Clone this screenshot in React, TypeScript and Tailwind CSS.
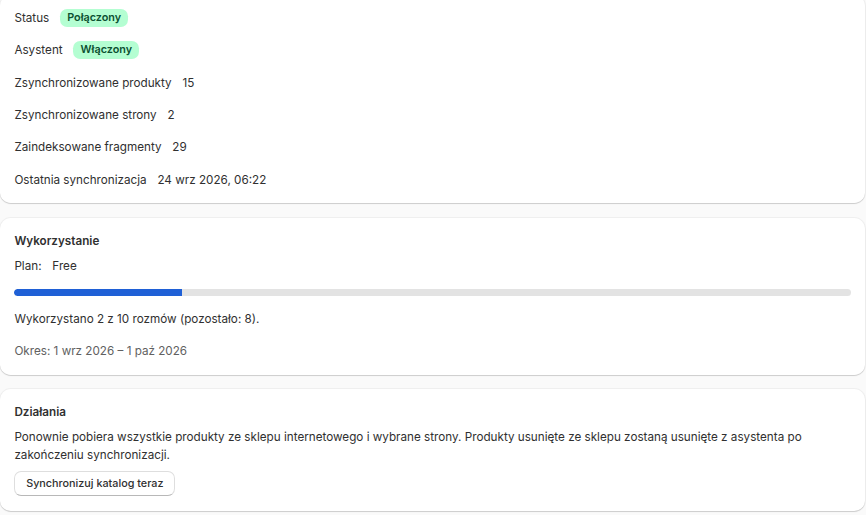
import React from "react";

function Badge({ children }: { children: React.ReactNode }) {
  return (
    <span className="inline-flex h-[18px] items-center rounded-[7.2px] bg-[#b4fed2] px-[7.2px] text-[10.8px] font-semibold leading-[14px] text-[#0c5132]">
      {children}
    </span>
  );
}

function Row({ label, children }: { label: string; children: React.ReactNode }) {
  return (
    <div className="flex h-[18px] items-center gap-[10.8px]">
      <span>{label}</span>
      {children}
    </div>
  );
}

const card =
  "w-[865px] rounded-[10.8px] bg-white px-[14.4px] shadow-[0_0_0_1px_rgba(0,0,0,0.045),0_1px_1px_rgba(0,0,0,0.14)]";

export default function App() {
  const used = 2;
  const total = 10;
  return (
    <div
      className="min-h-[515px] overflow-hidden bg-[#fafafa] text-[11.7px] leading-[18px] text-[#303030]"
      style={{ fontFamily: "Inter, 'Noto Sans', sans-serif" }}
    >
      <div className="-mt-[5.5px] flex flex-col gap-[14.4px]">
        <div className={`${card} flex flex-col gap-[14.4px] pb-[14.4px] pt-[14.4px]`}>
          <Row label="Status">
            <Badge>Połączony</Badge>
          </Row>
          <Row label="Asystent">
            <Badge>Włączony</Badge>
          </Row>
          <Row label="Zsynchronizowane produkty">
            <span>15</span>
          </Row>
          <Row label="Zsynchronizowane strony">
            <span>2</span>
          </Row>
          <Row label="Zaindeksowane fragmenty">
            <span>29</span>
          </Row>
          <Row label="Ostatnia synchronizacja">
            <span>24 wrz 2026, 06:22</span>
          </Row>
        </div>

        <div className={`${card} pb-[14.4px] pt-[14.4px]`}>
          <h2 className="text-[11.7px] font-semibold leading-[18px]">Wykorzystanie</h2>
          <div className="mt-[7.2px] flex gap-[10.8px]">
            <span>Plan:</span>
            <span>Free</span>
          </div>
          <div className="mt-[13.5px] h-[7.5px] w-full overflow-hidden rounded-full bg-[#e3e3e3]">
            <div
              className="h-full rounded-l-full bg-[#1f60d6]"
              style={{ width: `${(used / total) * 100}%` }}
            />
          </div>
          <p className="mt-[14px]">Wykorzystano 2 z 10 rozmów (pozostało: 8).</p>
          <p className="mt-[14px] text-[#616161]">Okres: 1 wrz 2026 – 1 paź 2026</p>
        </div>

        <div className={`${card} pb-[14.4px] pt-[14.4px]`}>
          <h2 className="text-[11.7px] font-semibold leading-[18px]">Działania</h2>
          <p className="mt-[6.5px]">
            Ponownie pobiera wszystkie produkty ze sklepu internetowego i wybrane strony. Produkty usunięte ze sklepu zostaną usunięte z asystenta po zakończeniu synchronizacji.
          </p>
          <button
            type="button"
            className="mt-[7.2px] flex h-[25.2px] items-center rounded-[7.2px] border border-[#dedede] border-b-[#b8b8b8] bg-white px-[10.8px] text-[10.8px] font-[550] text-[#303030]"
          >
            Synchronizuj katalog teraz
          </button>
        </div>
      </div>
    </div>
  );
}
